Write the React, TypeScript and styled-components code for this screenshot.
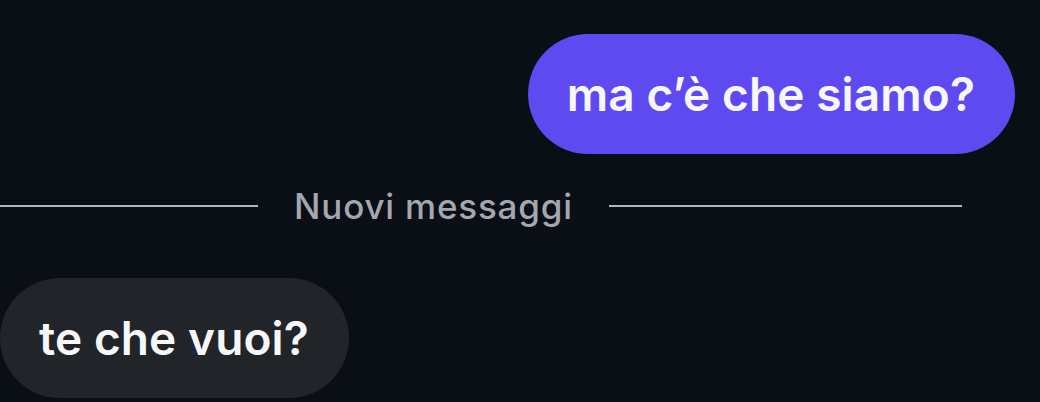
import styled, { createGlobalStyle } from "styled-components";

const GlobalStyle = createGlobalStyle`
  html, body {
    margin: 0;
    padding: 0;
    background: #0a0e15;
    overflow: hidden;
  }
`;

const Chat = styled.div`
  width: 1040px;
  height: 402px;
  padding-top: 34px;
  box-sizing: border-box;
  display: flex;
  flex-direction: column;
  font-family: Inter, "Liberation Sans", Arial, sans-serif;
`;

const Row = styled.div<{ $mine?: boolean }>`
  display: flex;
  justify-content: ${(p) => (p.$mine ? "flex-end" : "flex-start")};
  padding: ${(p) => (p.$mine ? "0 25px 0 0" : "0")};
`;

const Bubble = styled.div<{ $mine?: boolean }>`
  height: 120px;
  padding: 0 40px 0 39px;
  border-radius: 60px;
  display: flex;
  align-items: center;
  background: ${(p) => (p.$mine ? "#5f4af1" : "#212429")};
  color: #f7f7fa;
  font-size: 46px;
  font-weight: 600;
  letter-spacing: 0.1px;
`;

const Divider = styled.div`
  margin-top: 30px;
  height: 44px;
  width: 962px;
  display: flex;
  align-items: center;
  gap: 36px;
`;

const Line = styled.div<{ $w?: string }>`
  height: 2px;
  background: #b0b4bb;
  flex: ${(p) => p.$w ?? "1"};
`;

const DividerLabel = styled.span`
  color: #a3a7b0;
  font-size: 35px;
  font-weight: 500;
  letter-spacing: 0.8px;
  white-space: nowrap;
`;

export default function App() {
  return (
    <>
      <GlobalStyle />
      <Chat>
        <Row $mine>
          <Bubble $mine>ma c’è che siamo?</Bubble>
        </Row>
        <Divider>
          <Line $w="0 0 258px" />
          <DividerLabel>Nuovi messaggi</DividerLabel>
          <Line />
        </Divider>
        <Row style={{ marginTop: 50 }}>
          <Bubble>te che vuoi?</Bubble>
        </Row>
      </Chat>
    </>
  );
}
